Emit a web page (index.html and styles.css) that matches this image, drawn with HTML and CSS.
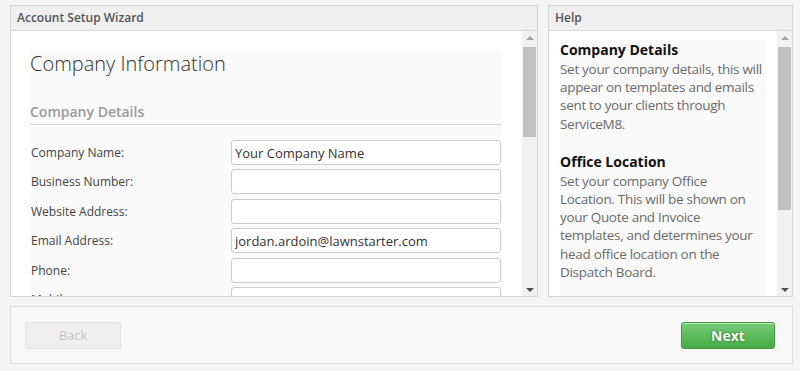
FILE: index.html
```html
<!DOCTYPE html>
<html lang="en">
<head>
<meta charset="utf-8">
<title>Account Setup Wizard</title>
<link rel="stylesheet" href="styles.css">
</head>
<body>
<div class="page">
  <div class="top">
    <section class="panel wizard">
      <header class="panel-head">Account Setup Wizard</header>
      <div class="panel-body">
        <div class="scroll-content">
          <div class="card">
            <h1 class="title">Company Information</h1>
            <h2 class="section">Company Details</h2>
            <div class="form">
              <label class="label">Company Name:</label>
              <input class="field" type="text" value="Your Company Name">
              <label class="label">Business Number:</label>
              <input class="field" type="text" value="">
              <label class="label">Website Address:</label>
              <input class="field" type="text" value="">
              <label class="label">Email Address:</label>
              <input class="field" type="text" value="jordan.ardoin@lawnstarter.com">
              <label class="label">Phone:</label>
              <input class="field" type="text" value="">
              <label class="label">Mobile:</label>
              <input class="field" type="text" value="">
            </div>
          </div>
        </div>
        <div class="scrollbar">
          <span class="arrow up"></span>
          <div class="track"><div class="thumb thumb-wizard"></div></div>
          <span class="arrow down"></span>
        </div>
      </div>
    </section>
    <section class="panel help">
      <header class="panel-head">Help</header>
      <div class="panel-body">
        <div class="scroll-content">
          <div class="help-card">
            <h3 class="help-title">Company Details</h3>
            <p class="help-text">Set your company details, this will appear on templates and emails sent to your clients through ServiceM8.</p>
            <h3 class="help-title">Office Location</h3>
            <p class="help-text">Set your company Office Location. This will be shown on your Quote and Invoice templates, and determines your head office location on the Dispatch Board.</p>
          </div>
        </div>
        <div class="scrollbar">
          <span class="arrow up"></span>
          <div class="track"><div class="thumb thumb-help"></div></div>
          <span class="arrow down"></span>
        </div>
      </div>
    </section>
  </div>
  <footer class="footer">
    <button class="btn back" type="button">Back</button>
    <button class="btn next" type="button">Next</button>
  </footer>
</div>
</body>
</html>
```
FILE: styles.css
```css
* { box-sizing: border-box; }
html, body { margin: 0; padding: 0; }
body {
  background: #f5f5f5;
  font-family: "Open Sans", "Noto Sans", "Liberation Sans", sans-serif;
  color: #444;
}
.page {
  width: 800px;
  height: 371px;
  padding: 5px 7px 0 10px;
  overflow: hidden;
}
.top {
  display: flex;
  gap: 10px;
  height: 292px;
}
.panel {
  display: flex;
  flex-direction: column;
  border: 1px solid #d6d6d6;
  background: #fff;
}
.wizard { width: 528px; }
.help { flex: 1; }
.panel-head {
  height: 25px;
  line-height: 24px;
  padding-left: 6px;
  background: #efefef;
  border-bottom: 1px solid #d9d9d9;
  font-size: 12px;
  font-weight: 600;
  color: #555;
}
.panel-body {
  flex: 1;
  display: flex;
  min-height: 0;
}
.scroll-content {
  flex: 1;
  overflow: hidden;
}
.scrollbar {
  width: 15px;
  display: flex;
  flex-direction: column;
  background: #f1f1f1;
}
.arrow {
  height: 15px;
  display: flex;
  align-items: center;
  justify-content: center;
}
.arrow::before {
  content: "";
  width: 0;
  height: 0;
  border-left: 4px solid transparent;
  border-right: 4px solid transparent;
}
.arrow.up::before { border-bottom: 4px solid #a3a3a3; margin-top: -2px; }
.arrow.down::before { border-top: 4px solid #505050; margin-top: 2px; }
.track {
  flex: 1;
  padding: 1px 1px 0 1px;
}
.thumb {
  background: #c1c1c1;
}
.thumb-wizard { height: 90px; }
.thumb-help { height: 163px; }

/* wizard card */
.card {
  margin: 19px 0 0 19px;
  width: 472px;
  background: #fafafa;
  padding-bottom: 20px;
}
.title {
  margin: 0;
  font-size: 20px;
  font-weight: 300;
  line-height: 28px;
  color: #333;
}
.section {
  margin: 24px 0 0;
  font-size: 14px;
  font-weight: 600;
  line-height: 20px;
  color: #9a9a9a;
  padding-bottom: 2px;
  border-bottom: 1px solid #d4d4d4;
}
.form {
  margin-top: 15px;
  display: grid;
  grid-template-columns: 201px 270px;
  grid-auto-rows: 29.4px;
  align-items: start;
}
.label {
  padding-left: 1px;
  height: 25px;
  line-height: 25px;
  font-size: 12px;
  color: #444;
}
.field {
  width: 270px;
  height: 25px;
  margin: 0;
  padding: 0 3px;
  border: 1px solid #cdcdcd;
  border-radius: 3px;
  background: #fff;
  font-family: "Open Sans", "Noto Sans", "Liberation Sans", sans-serif;
  font-size: 13px;
  color: #333;
  outline: none;
}

/* help card */
.help-card {
  margin: 9px 11px 0 11px;
  padding: 0 3px 20px 0;
  background: #fafafa;
}
.help-title {
  margin: 0;
  font-size: 14px;
  font-weight: 700;
  line-height: 20px;
  color: #111;
}
.help-text {
  margin: 0 0 19px;
  font-size: 13.5px;
  font-weight: 400;
  letter-spacing: -0.3px;
  line-height: 18.2px;
  color: #6a6a6a;
}

/* footer */
.footer {
  margin-top: 9px;
  height: 58px;
  border: 1px solid #dedede;
  background: #f8f8f8;
  display: flex;
  align-items: center;
  justify-content: space-between;
  padding: 0 17px 0 14px;
}
.btn {
  height: 27px;
  margin: 0;
  font-family: "Open Sans", "Noto Sans", "Liberation Sans", sans-serif;
  cursor: pointer;
}
.back {
  width: 96px;
  background: #efefef;
  border: 1px solid #e4e4e4;
  border-radius: 2px;
  color: #c4c4c4;
  font-size: 13px;
}
.next {
  width: 94px;
  background: linear-gradient(#78cd78, #44ab44);
  border: 1px solid #3f9c3f;
  border-radius: 3px;
  box-shadow: inset 0 1px 0 rgba(255,255,255,0.5);
  color: #fff;
  font-size: 14px;
  font-weight: 700;
  text-shadow: 0 0 2px rgba(0,60,0,0.8);
}
```
